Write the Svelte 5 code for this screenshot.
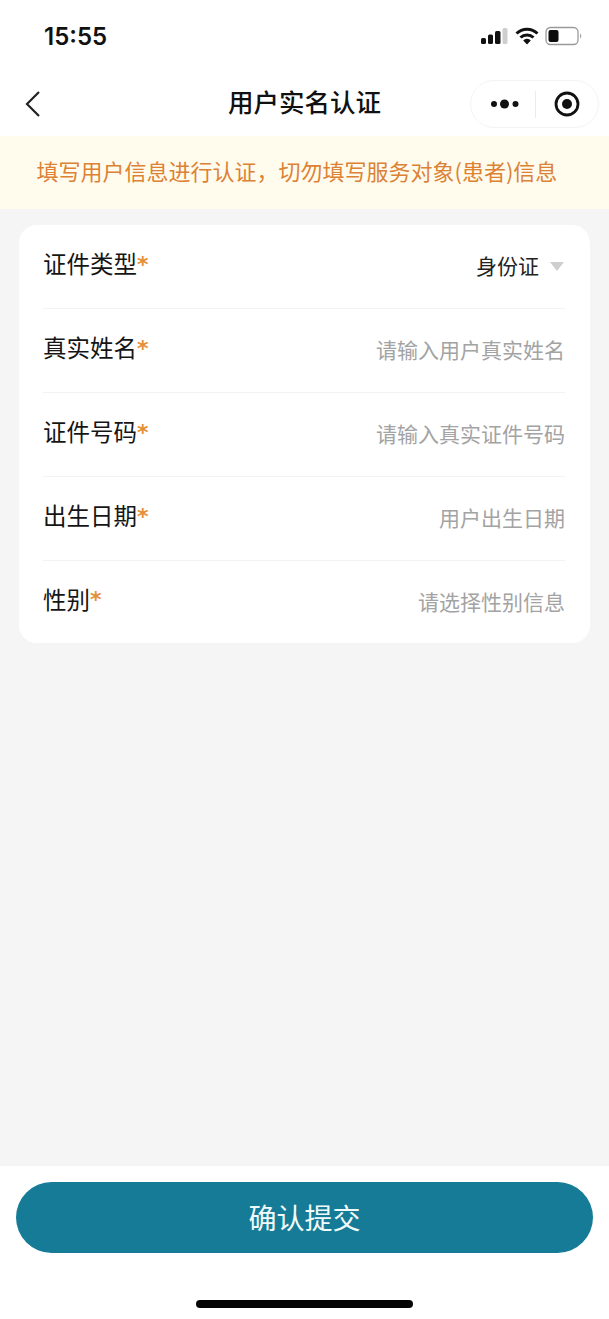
<script>
	const fields = [
		{ label: '证件类型', value: '身份证', select: true },
		{ label: '真实姓名', placeholder: '请输入用户真实姓名' },
		{ label: '证件号码', placeholder: '请输入真实证件号码' },
		{ label: '出生日期', placeholder: '用户出生日期' },
		{ label: '性别', placeholder: '请选择性别信息' }
	];
</script>

<div class="page">
	<div class="status">
		<span class="time">15:55</span>
		<div class="status-icons">
			<svg width="28" height="18" viewBox="0 0 28 18">
				<rect x="0" y="11" width="5" height="6" rx="1.5" fill="#111" />
				<rect x="7" y="7.5" width="5" height="9.5" rx="1.5" fill="#111" />
				<rect x="14" y="4" width="5.5" height="13" rx="1.5" fill="#111" />
				<rect x="21.5" y="1" width="5" height="16" rx="1.5" fill="#cfcfcf" />
			</svg>
			<svg width="24" height="18" viewBox="0 0 24 18">
				<path d="M1.5 6.5a15 15 0 0 1 21 0" fill="none" stroke="#111" stroke-width="3" />
				<path d="M5.5 10.5a9.5 9.5 0 0 1 13 0" fill="none" stroke="#111" stroke-width="3" />
				<path d="M8.2 13.4a5 5 0 0 1 7.6 0L12 17.5z" fill="#111" />
			</svg>
			<svg width="38" height="20" viewBox="0 0 38 20">
				<rect x="1" y="1.5" width="32" height="17" rx="4.5" fill="#fff" stroke="#9a9a9a" stroke-width="1.3" />
				<rect x="3.5" y="4" width="10" height="12" rx="2" fill="#0c0c0c" />
				<path d="M35 7.5a3 3 0 0 1 0 5z" fill="#a8a8a8" />
			</svg>
		</div>
	</div>

	<header class="nav">
		<svg class="back" width="18" height="28" viewBox="0 0 18 28">
			<path d="M15 2 3 14l12 12" fill="none" stroke="#222" stroke-width="2.2" />
		</svg>
		<h1>用户实名认证</h1>
		<div class="capsule">
			<svg width="30" height="12" viewBox="0 0 30 12">
				<circle cx="4" cy="6" r="3" fill="#111" />
				<circle cx="14.5" cy="6" r="4.5" fill="#111" />
				<circle cx="25.5" cy="6" r="3" fill="#111" />
			</svg>
			<span class="sep"></span>
			<svg width="26" height="26" viewBox="0 0 26 26">
				<circle cx="13" cy="13" r="11" fill="none" stroke="#111" stroke-width="2.8" />
				<circle cx="13" cy="13" r="5" fill="#111" />
			</svg>
		</div>
	</header>

	<div class="notice">填写用户信息进行认证，切勿填写服务对象(患者)信息</div>

	<main class="content">
		<section class="card">
			{#each fields as f}
				<div class="row">
					<span class="label">{f.label}<em>*</em></span>
					{#if f.select}
						<span class="value">{f.value}<i class="caret"></i></span>
					{:else}
						<span class="placeholder">{f.placeholder}</span>
					{/if}
				</div>
			{/each}
		</section>
	</main>

	<footer class="footer">
		<button class="submit">确认提交</button>
		<div class="home"></div>
	</footer>
</div>

<style>
	:global(body) {
		margin: 0;
		background: #fff;
	}

	.page {
		display: flex;
		flex-direction: column;
		height: 1319px;
		overflow: hidden;
		font-family: 'Noto Sans CJK SC', 'Liberation Sans', sans-serif;
		color: #151515;
	}

	.status {
		display: flex;
		justify-content: space-between;
		align-items: center;
		height: 72px;
		padding: 0 26px 0 44px;
		box-sizing: border-box;
	}

	.time {
		font-family: Inter, 'Liberation Sans', sans-serif;
		font-size: 24px;
		font-weight: 600;
		color: #111;
	}

	.status-icons {
		display: flex;
		align-items: center;
		gap: 6px;
	}

	.nav {
		display: flex;
		align-items: center;
		justify-content: space-between;
		height: 64px;
		padding: 0 10px 0 24px;
		position: relative;
	}

	.nav h1 {
		position: absolute;
		left: 0;
		right: 0;
		margin: 0;
		padding-bottom: 8px;
		text-align: center;
		font-size: 25.5px;
		font-weight: 500;
		color: #111;
	}

	.back {
		display: block;
	}

	.capsule {
		display: flex;
		align-items: center;
		justify-content: space-between;
		box-sizing: border-box;
		width: 129px;
		height: 48px;
		padding: 0 18px 0 19px;
		border: 1px solid #f4f4f4;
		border-radius: 24px;
		background: #fff;
		position: relative;
		z-index: 1;
	}

	.sep {
		width: 1px;
		height: 27px;
		margin-left: -3px;
		background: #ececec;
	}

	.notice {
		height: 73px;
		line-height: 69px;
		padding-left: 36.5px;
		font-size: 22px;
		color: #dd8234;
		background: #fffced;
		white-space: nowrap;
	}

	.content {
		flex: 1;
		background: #f5f5f5;
		padding: 16px 19px 0 19px;
	}

	.card {
		background: #fff;
		border-radius: 18px;
		padding: 0 25px 0 24px;
	}

	.row {
		display: flex;
		justify-content: space-between;
		align-items: center;
		height: 84px;
		box-sizing: border-box;
		border-bottom: 1px solid #f3f3f3;
	}

	.row:last-child {
		border-bottom: 0;
		height: 82px;
	}

	.label {
		display: flex;
		align-items: center;
		font-size: 23.5px;
		margin-top: -7px;
		color: #151515;
	}

	.label em {
		font-family: 'DejaVu Sans', sans-serif;
		font-style: normal;
		font-weight: 700;
		font-size: 22px;
		line-height: 1;
		margin-top: 3px;
		color: #e59038;
	}

	.value {
		display: flex;
		align-items: center;
		margin-top: -3px;
		font-size: 21px;
		color: #222;
	}

	.caret {
		width: 0;
		height: 0;
		margin-left: 11px;
		margin-top: 2px;
		margin-right: 1px;
		border-left: 7px solid transparent;
		border-right: 7px solid transparent;
		border-top: 9px solid #cfcfcf;
	}

	.placeholder {
		margin-top: -3px;
		font-size: 21px;
		color: #a3a3a3;
	}

	.footer {
		display: flex;
		flex-direction: column;
		align-items: center;
		height: 153px;
		box-sizing: border-box;
		padding-top: 16px;
		background: #fff;
	}

	.submit {
		width: 577px;
		height: 71px;
		border: 0;
		border-radius: 36px;
		background: #167b96;
		color: #f1fbfb;
		font-family: inherit;
		font-size: 28px;
		font-weight: 400;
		padding: 0 0 1px;
	}

	.home {
		width: 217px;
		height: 8px;
		margin-top: 47px;
		border-radius: 4px;
		background: #050505;
	}
</style>
